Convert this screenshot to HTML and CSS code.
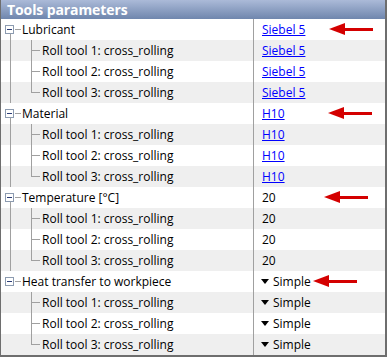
FILE: index.html
```html
<!DOCTYPE html>
<html>
<head>
<meta charset="utf-8">
<link rel="stylesheet" href="styles.css">
</head>
<body>
<div class="panel">
  <div class="header">Tools parameters</div>
  <div class="body">
    <div class="group">
      <div class="row root"><div class="name"><span class="box"></span><span class="label">Lubricant</span></div><div class="value"><a class="link">Siebel 5</a><span class="arrow a1"></span></div></div>
      <div class="row child"><div class="name"><span class="label">Roll tool 1: cross_rolling</span></div><div class="value"><a class="link">Siebel 5</a></div></div>
      <div class="row child"><div class="name"><span class="label">Roll tool 2: cross_rolling</span></div><div class="value"><a class="link">Siebel 5</a></div></div>
      <div class="row child last"><div class="name"><span class="label">Roll tool 3: cross_rolling</span></div><div class="value"><a class="link">Siebel 5</a></div></div>
    </div>
    <div class="group">
      <div class="row root"><div class="name"><span class="box"></span><span class="label">Material</span></div><div class="value"><a class="link">H10</a><span class="arrow a2"></span></div></div>
      <div class="row child"><div class="name"><span class="label">Roll tool 1: cross_rolling</span></div><div class="value"><a class="link">H10</a></div></div>
      <div class="row child"><div class="name"><span class="label">Roll tool 2: cross_rolling</span></div><div class="value"><a class="link">H10</a></div></div>
      <div class="row child last"><div class="name"><span class="label">Roll tool 3: cross_rolling</span></div><div class="value"><a class="link">H10</a></div></div>
    </div>
    <div class="group">
      <div class="row root"><div class="name"><span class="box"></span><span class="label">Temperature [°C]</span></div><div class="value">20<span class="arrow a3"></span></div></div>
      <div class="row child"><div class="name"><span class="label">Roll tool 1: cross_rolling</span></div><div class="value">20</div></div>
      <div class="row child"><div class="name"><span class="label">Roll tool 2: cross_rolling</span></div><div class="value">20</div></div>
      <div class="row child last"><div class="name"><span class="label">Roll tool 3: cross_rolling</span></div><div class="value">20</div></div>
    </div>
    <div class="group">
      <div class="row root"><div class="name"><span class="box"></span><span class="label">Heat transfer to workpiece</span></div><div class="value"><span class="tri"></span>Simple<span class="arrow a4"></span></div></div>
      <div class="row child"><div class="name"><span class="label">Roll tool 1: cross_rolling</span></div><div class="value"><span class="tri"></span>Simple</div></div>
      <div class="row child"><div class="name"><span class="label">Roll tool 2: cross_rolling</span></div><div class="value"><span class="tri"></span>Simple</div></div>
      <div class="row child last"><div class="name"><span class="label">Roll tool 3: cross_rolling</span></div><div class="value"><span class="tri"></span>Simple</div></div>
    </div>
  </div>
</div>
</body>
</html>
```
FILE: styles.css
```css
html, body { margin: 0; padding: 0; background: #fff; }
body { font-family: "Open Sans", "Noto Sans", sans-serif; font-size: 12px; color: #000; }
.panel {
  width: 387px; height: 357px; box-sizing: border-box;
  border-left: 1px solid #6e6e6e; border-right: 2px solid #6e6e6e; border-bottom: 2px solid #6e6e6e;
  overflow: hidden;
}
.header {
  height: 19px; line-height: 19px; padding-left: 6px;
  background: linear-gradient(#abbad8, #6f86ad);
  color: #fff; font-weight: bold; font-size: 14px; letter-spacing: -0.1px;
}
.row { display: grid; grid-template-columns: 252px 1fr; height: 21px; background: #fff; }
.group .row:nth-child(even) { background: #efefef; }
.name { position: relative; display: flex; align-items: center; }
.value { border-left: 1px solid #a0a0a0; display: flex; align-items: center; padding-left: 8px; position: relative; }
.root .name { padding-left: 4px; }
.box {
  width: 7px; height: 7px; border: 1px solid #8c9bb0; background: #fff; position: relative; flex: none;
}
.box::after { content: ""; position: absolute; left: 1px; top: 3px; width: 5px; height: 1px; background: #2c3d77; }
.root .label { margin-left: 8px; }
.root .name::after { content: ""; position: absolute; left: 14px; top: 10px; width: 6px; height: 1px; background: #a0a0a0; }
.group:not(:last-child) .root .name::before { content: ""; position: absolute; left: 9px; top: 15px; bottom: 0; width: 1px; background: #a0a0a0; }
.group:not(:last-child) .child .name::before { content: ""; position: absolute; left: 9px; top: 0; bottom: 0; width: 1px; background: #a0a0a0; }
.child .label { margin-left: 41px; position: relative; line-height: 21px; }
.child .label::before { content: ""; position: absolute; left: -11px; top: 0; width: 1px; height: 21px; background: #a0a0a0; }
.child.last .label::before { height: 11px; }
.child .label::after { content: ""; position: absolute; left: -11px; top: 10px; width: 9px; height: 1px; background: #a0a0a0; }
.link { color: #0000ff; text-decoration: underline; }
.tri { width: 0; height: 0; border-left: 4.5px solid transparent; border-right: 4.5px solid transparent; border-top: 5px solid #000; margin-right: 4px; margin-left: -1px; }
.arrow { position: absolute; top: 4px; width: 44px; height: 13px; }
.a1 { left: 75px; }
.a2 { left: 74px; }
.a3 { left: 70px; }
.a4 { left: 59px; }
.arrow::before { content: ""; position: absolute; left: 0; top: 0; border-right: 16px solid #d40000; border-top: 6.5px solid transparent; border-bottom: 6.5px solid transparent; }
.arrow::after { content: ""; position: absolute; left: 14px; top: 5px; width: 30px; height: 3px; background: #d40000; }
```
